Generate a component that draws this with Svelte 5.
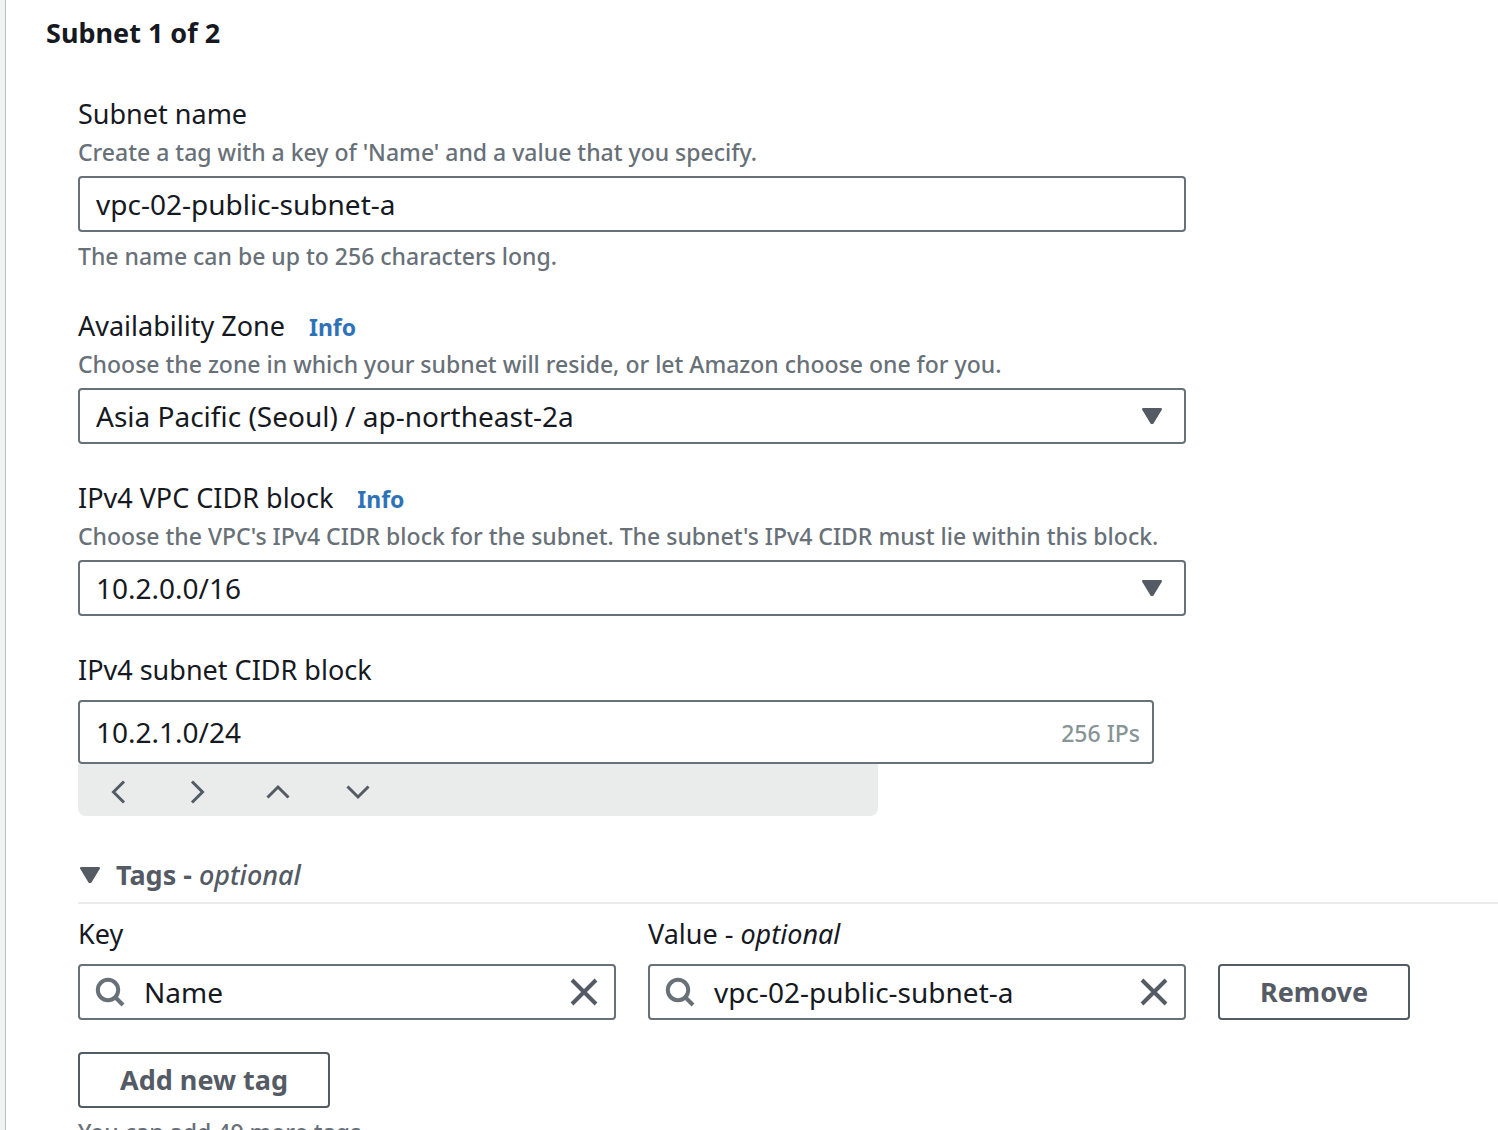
<script>
  let subnetName = $state("vpc-02-public-subnet-a");
  let zone = $state("ap-northeast-2a");
  let vpcCidr = $state("10.2.0.0/16");
  let subnetCidr = $state("10.2.1.0/24");
  let tagsOpen = $state(true);
  let tags = $state([{ key: "Name", value: "vpc-02-public-subnet-a" }]);

  const MAX_TAGS = 50;
  let remaining = $derived(MAX_TAGS - tags.length);
  let ipCount = $derived(2 ** (32 - Number(subnetCidr.split("/")[1] || 32)));

  const steps = [
    { name: "Previous block", d: "M26 11.5 15.5 22 26 32.5" },
    { name: "Next block", d: "M14 11.5 24.5 22 14 32.5" },
    { name: "Larger block", d: "M9.5 27.5 20 17 30.5 27.5" },
    { name: "Smaller block", d: "M9.5 16.5 20 27 30.5 16.5" }
  ];

  function shift(i) {
    const [ip, mask] = subnetCidr.split("/");
    const parts = ip.split(".").map(Number);
    let bits = Number(mask);
    if (i === 0) parts[2] = Math.max(0, parts[2] - 1);
    if (i === 1) parts[2] = Math.min(255, parts[2] + 1);
    if (i === 2) bits = Math.max(16, bits - 1);
    if (i === 3) bits = Math.min(28, bits + 1);
    subnetCidr = `${parts.join(".")}/${bits}`;
  }

  function addTag() {
    tags.push({ key: "", value: "" });
  }

  function removeTag(i) {
    tags.splice(i, 1);
  }
</script>

{#snippet caret(cls)}
  <svg class={cls} width="20" height="16" viewBox="0 0 20 16" aria-hidden="true">
    <path d="M1.2 1.2h17.6L10.6 14.6a.8.8 0 0 1-1.2 0z" fill="currentColor" stroke="currentColor" stroke-width="2.4" stroke-linejoin="round" />
  </svg>
{/snippet}

{#snippet searchIcon()}
  <svg class="search-icon" width="32" height="32" viewBox="0 0 32 32" aria-hidden="true">
    <circle cx="14" cy="14" r="10.2" />
    <path d="M21 21l8 8" />
  </svg>
{/snippet}

{#snippet tagInput(tag, field, id)}
  <div class="control">
    {@render searchIcon()}
    <input {id} class="box search" type="text" bind:value={tag[field]} />
    <button class="clear" type="button" aria-label="Clear {field}" onclick={() => (tag[field] = "")}>
      <svg width="28" height="28" viewBox="0 0 28 28" aria-hidden="true">
        <path d="M2 2l24 24M26 2 2 26" />
      </svg>
    </button>
  </div>
{/snippet}

<main class="panel">
  <h2>Subnet 1 of 2</h2>

  <form class="body" onsubmit={(e) => e.preventDefault()}>
    <div class="fields">
      <div class="field">
        <label for="subnet-name">Subnet name</label>
        <p class="note">Create a tag with a key of 'Name' and a value that you specify.</p>
        <div class="control">
          <input id="subnet-name" class="box" type="text" bind:value={subnetName} />
        </div>
        <p class="note below">The name can be up to 256 characters long.</p>
      </div>

      <div class="field">
        <div class="label-row">
          <label for="zone">Availability Zone</label>
          <a href="#zone-info">Info</a>
        </div>
        <p class="note">Choose the zone in which your subnet will reside, or let Amazon choose one for you.</p>
        <div class="control">
          <select id="zone" class="box" bind:value={zone}>
            <option value="ap-northeast-2a">Asia Pacific (Seoul) / ap-northeast-2a</option>
          </select>
          {@render caret("select-caret")}
        </div>
      </div>

      <div class="field">
        <div class="label-row">
          <label for="vpc-cidr">IPv4 VPC CIDR block</label>
          <a href="#cidr-info">Info</a>
        </div>
        <p class="note">Choose the VPC's IPv4 CIDR block for the subnet. The subnet's IPv4 CIDR must lie within this block.</p>
        <div class="control">
          <select id="vpc-cidr" class="box" bind:value={vpcCidr}>
            <option value="10.2.0.0/16">10.2.0.0/16</option>
          </select>
          {@render caret("select-caret")}
        </div>
      </div>

      <div class="field cidr">
        <label for="subnet-cidr">IPv4 subnet CIDR block</label>
        <div class="control">
          <input id="subnet-cidr" class="box tall" type="text" bind:value={subnetCidr} />
          <span class="count">{ipCount} IPs</span>
        </div>
        <div class="stepper">
          {#each steps as step, i}
            <button type="button" aria-label={step.name} onclick={() => shift(i)}>
              <svg width="40" height="40" viewBox="0 0 40 40" aria-hidden="true">
                <path d={step.d} />
              </svg>
            </button>
          {/each}
        </div>
      </div>
    </div>

    <section class="tags">
      <button class="expander" type="button" aria-expanded={tagsOpen} onclick={() => (tagsOpen = !tagsOpen)}>
        {@render caret(tagsOpen ? "" : "closed")}
        <span>Tags - <em>optional</em></span>
      </button>

      {#if tagsOpen}
        <div class="tag-list">
          {#each tags as tag, i}
            <div class="tag-row">
              <div>
                <label for="key-{i}">Key</label>
                {@render tagInput(tag, "key", `key-${i}`)}
              </div>
              <div>
                <label for="value-{i}">Value - <em>optional</em></label>
                {@render tagInput(tag, "value", `value-${i}`)}
              </div>
              <button class="btn" type="button" onclick={() => removeTag(i)}>Remove</button>
            </div>
          {/each}
        </div>
        <button class="btn" type="button" onclick={addTag}>Add new tag</button>
        <p class="note below">You can add {remaining} more tags.</p>
      {/if}
    </section>
  </form>
</main>

<style>
  :global(body) {
    background: #f2f3f3;
  }

  .panel {
    box-sizing: border-box;
    margin-left: 5px;
    padding: 12px 0 16px 40px;
    border-left: 1px solid #bbbfbf;
    background: #fff;
    color: #16191f;
    font: 27px/44px "Noto Sans", "Open Sans", sans-serif;
  }

  h2 {
    margin: 0 0 38px;
    font-size: 27px;
    font-weight: 700;
    line-height: 42px;
  }

  .body {
    padding-left: 32px;
  }

  .fields {
    display: flex;
    flex-direction: column;
    gap: 32px;
    max-width: 1108px;
  }

  label {
    display: block;
  }

  .label-row {
    display: flex;
    align-items: baseline;
    gap: 24px;
  }

  a {
    color: #2e73b8;
    font-size: 23px;
    font-weight: 700;
    line-height: 32px;
    text-decoration: none;
  }

  .note {
    margin: 0;
    color: #687078;
    font-size: 23px;
    font-weight: 500;
    line-height: 32px;
  }

  .below {
    margin-top: 8px;
  }

  .control {
    position: relative;
    margin-top: 8px;
  }

  .box {
    display: block;
    box-sizing: border-box;
    width: 100%;
    height: 56px;
    padding: 0 16px;
    border: 2px solid #687078;
    border-radius: 4px;
    background: #fff;
    color: #16191f;
    font: inherit;
    font-size: 28px;
    appearance: none;
  }

  .tall {
    height: 64px;
  }

  .search {
    padding: 0 64px;
  }

  .select-caret {
    position: absolute;
    top: 20px;
    right: 24px;
    color: #545b64;
    pointer-events: none;
  }

  .cidr {
    margin-right: 32px;
  }

  .count {
    position: absolute;
    top: 13px;
    right: 14px;
    color: #879596;
    font-size: 23px;
    font-weight: 500;
    line-height: 40px;
  }

  .stepper {
    display: flex;
    max-width: 800px;
    border-radius: 0 0 8px 8px;
    background: #eaeceb;
  }

  .stepper button {
    display: grid;
    place-items: center;
    width: 80px;
    height: 52px;
    padding: 0;
    border: 0;
    background: none;
  }

  .stepper path {
    fill: none;
    stroke: #545b64;
    stroke-width: 3;
  }

  .tags {
    margin-top: 32px;
  }

  .expander {
    display: flex;
    align-items: center;
    gap: 16px;
    width: 100%;
    height: 56px;
    padding: 0 2px;
    border: 0;
    border-bottom: 2px solid #eaeceb;
    background: none;
    color: #545b64;
    font: inherit;
    font-weight: 700;
    text-align: left;
  }

  .expander em {
    font-weight: 500;
  }

  .closed {
    transform: rotate(-90deg);
  }

  .tag-list {
    padding: 8px 0 32px;
  }

  .tag-row {
    display: grid;
    grid-template-columns: 1fr 1fr 192px;
    align-items: end;
    gap: 32px;
    max-width: 1332px;
  }

  .search-icon {
    position: absolute;
    top: 12px;
    left: 16px;
    fill: none;
    stroke: #687078;
    stroke-width: 4;
  }

  .clear {
    position: absolute;
    top: 14px;
    right: 18px;
    display: block;
    width: 28px;
    height: 28px;
    padding: 0;
    border: 0;
    background: none;
  }

  .clear svg {
    display: block;
  }

  .clear path {
    fill: none;
    stroke: #545b64;
    stroke-width: 4;
  }

  .btn {
    box-sizing: border-box;
    height: 56px;
    padding: 0 40px;
    border: 2px solid #545b64;
    border-radius: 4px;
    background: #fff;
    color: #545b64;
    font: inherit;
    font-weight: 700;
    white-space: nowrap;
  }

  button {
    cursor: pointer;
  }
</style>
